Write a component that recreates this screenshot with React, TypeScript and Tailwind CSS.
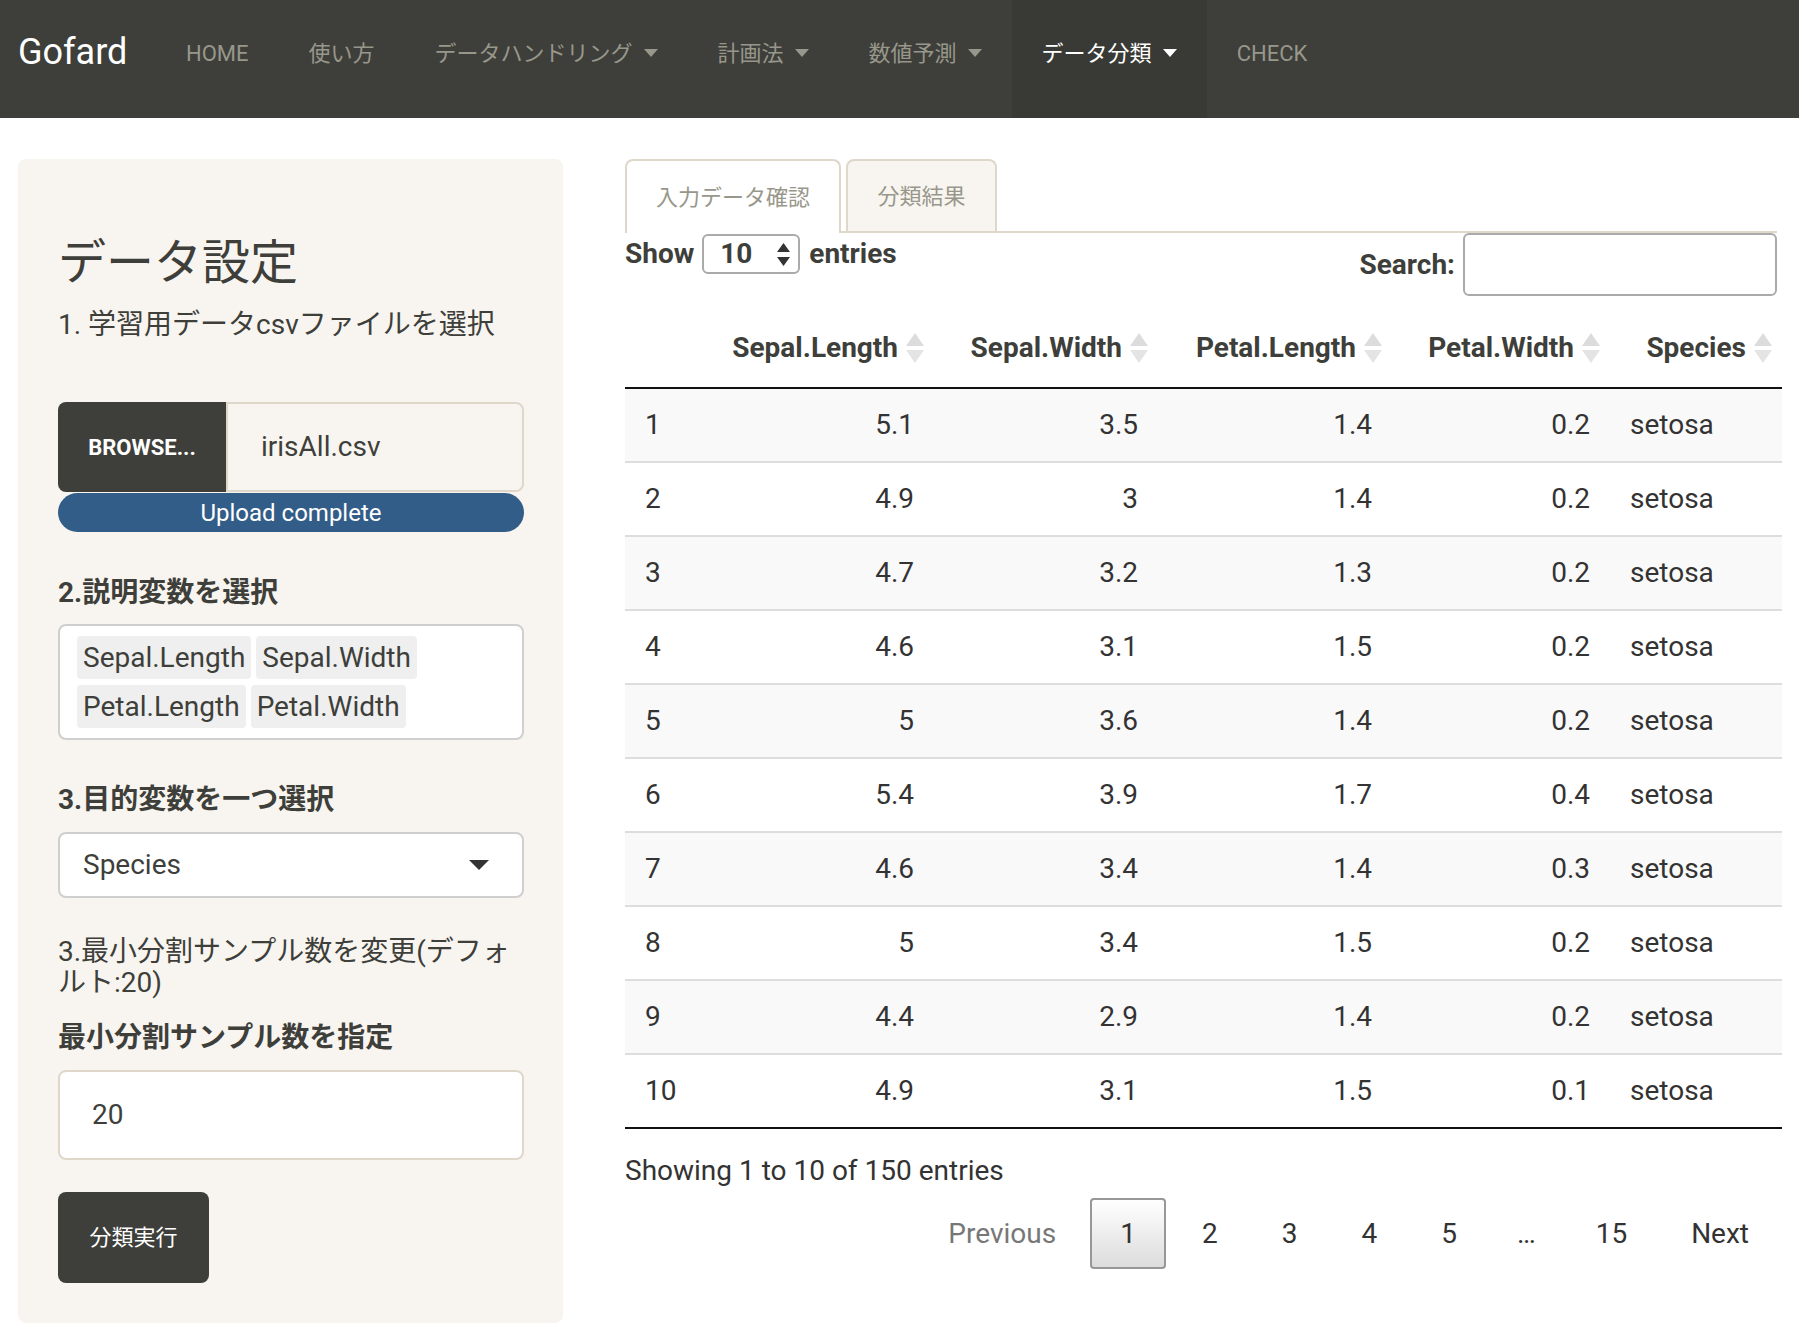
import React from 'react';

const navItems = [
  { label: 'HOME', caret: false, active: false },
  { label: '使い方', caret: false, active: false },
  { label: 'データハンドリング', caret: true, active: false },
  { label: '計画法', caret: true, active: false },
  { label: '数値予測', caret: true, active: false },
  { label: 'データ分類', caret: true, active: true },
  { label: 'CHECK', caret: false, active: false },
];

const columns = ['', 'Sepal.Length', 'Sepal.Width', 'Petal.Length', 'Petal.Width', 'Species'];

const rows = [
  ['1', '5.1', '3.5', '1.4', '0.2'],
  ['2', '4.9', '3', '1.4', '0.2'],
  ['3', '4.7', '3.2', '1.3', '0.2'],
  ['4', '4.6', '3.1', '1.5', '0.2'],
  ['5', '5', '3.6', '1.4', '0.2'],
  ['6', '5.4', '3.9', '1.7', '0.4'],
  ['7', '4.6', '3.4', '1.4', '0.3'],
  ['8', '5', '3.4', '1.5', '0.2'],
  ['9', '4.4', '2.9', '1.4', '0.2'],
  ['10', '4.9', '3.1', '1.5', '0.1'],
];

const grid = 'grid grid-cols-[75px_234px_224px_234px_218px_172px]';

function Caret() {
  return (
    <svg width="14" height="8" viewBox="0 0 14 8" className="ml-[11px]">
      <polygon points="0,0 14,0 7,8" fill="currentColor" />
    </svg>
  );
}

function SortIcon() {
  return (
    <svg width="18" height="30" viewBox="0 0 18 30" className="absolute right-[10px] top-1/2 -translate-y-1/2">
      <polygon points="9,0 18,13 0,13" fill="#dcdcdc" />
      <polygon points="0,17 18,17 9,30" fill="#e4e4e4" />
    </svg>
  );
}

function Navbar() {
  return (
    <div className="flex h-[118px] items-stretch bg-[#3e3f3a]">
      <div className="flex w-[156px] items-center pb-[14px] pl-[18px] text-[36px] text-white">Gofard</div>
      {navItems.map((item) => (
        <div
          key={item.label}
          className={
            item.active
              ? 'flex items-center bg-[#393a35] px-[30px] pb-[12px] text-[22px] text-white'
              : 'flex items-center px-[30px] pb-[12px] text-[22px] text-[#98978b]'
          }
        >
          <span>{item.label}</span>
          {item.caret && <Caret />}
        </div>
      ))}
    </div>
  );
}

function Sidebar() {
  return (
    <div className="ml-[18px] mt-[41px] flex w-[545px] flex-col rounded-[8px] bg-[#f8f5f0] pb-[40px] pl-[40px] pr-[39px] pt-[77px] text-[#3e3f3a]">
      <h3 className="text-[48px] leading-[53px]">データ設定</h3>
      <p className="mt-[16px] text-[28px] leading-[40px]">1. 学習用データcsvファイルを選択</p>

      <div className="mt-[57px] flex h-[90px]">
        <div className="flex w-[168px] items-center justify-center rounded-l-[8px] bg-[#3e3f3a] text-[22px] font-bold text-white">
          BROWSE...
        </div>
        <div className="flex flex-1 items-center rounded-r-[8px] border-2 border-[#dfd7ca] bg-[#f8f5f0] pl-[33px] text-[28px]">
          irisAll.csv
        </div>
      </div>
      <div className="mt-[1px] flex h-[39px] items-center justify-center rounded-full bg-[#325d88] text-[24px] text-white">
        Upload complete
      </div>

      <label className="mt-[41px] text-[28px] font-bold leading-[40px]">2.説明変数を選択</label>
      <div className="mt-[11px] flex h-[116px] flex-col gap-[6px] rounded-[8px] border-2 border-[#cfcfcf] bg-white pl-[17px] pt-[10px]">
        <div className="flex gap-[5px]">
          <span className="flex h-[43px] items-center rounded-[4px] bg-[#efefef] px-[6px] text-[28px]">Sepal.Length</span>
          <span className="flex h-[43px] items-center rounded-[4px] bg-[#efefef] px-[6px] text-[28px]">Sepal.Width</span>
        </div>
        <div className="flex gap-[5px]">
          <span className="flex h-[43px] items-center rounded-[4px] bg-[#efefef] px-[6px] text-[28px]">Petal.Length</span>
          <span className="flex h-[43px] items-center rounded-[4px] bg-[#efefef] px-[6px] text-[28px]">Petal.Width</span>
        </div>
      </div>

      <label className="mt-[40px] text-[28px] font-bold leading-[40px]">3.目的変数を一つ選択</label>
      <div className="mt-[12px] flex h-[66px] items-center justify-between rounded-[8px] border-2 border-[#cfcfcf] bg-white pl-[23px] pr-[33px] text-[28px]">
        <span>Species</span>
        <svg width="20" height="10" viewBox="0 0 20 10">
          <polygon points="0,0 20,0 10,10" fill="#333" />
        </svg>
      </div>

      <p className="mt-[38px] text-[28px] leading-[31px]">3.最小分割サンプル数を変更(デフォルト:20)</p>
      <label className="mt-[20px] text-[28px] font-bold leading-[40px]">最小分割サンプル数を指定</label>
      <div className="mt-[12px] flex h-[90px] items-center rounded-[8px] border-2 border-[#dfd7ca] bg-white pl-[32px] text-[28px]">
        20
      </div>

      <button className="mt-[32px] h-[91px] w-[151px] rounded-[8px] bg-[#3e3f3a] text-[22px] text-white">分類実行</button>
    </div>
  );
}

function PageButton({ label, current }: { label: string; current?: boolean }) {
  return (
    <span
      className={
        current
          ? 'flex h-[71px] items-center rounded-[4px] border-2 border-[#979797] bg-gradient-to-b from-white to-[#dcdcdc] px-[28px] text-[#333]'
          : 'flex h-[71px] items-center border-2 border-transparent px-[26px] text-[#333]'
      }
    >
      {label}
    </span>
  );
}

function MainPanel() {
  return (
    <div className="ml-[62px] mt-[41px] flex w-[1157px] flex-col text-[#333]">
      <div className="mr-[5px] flex h-[74px] items-end gap-[5px] border-b-2 border-[#dfd7ca]">
        <div className="relative z-10 -mb-[2px] flex h-[74px] w-[216px] items-center justify-center rounded-t-[8px] border-2 border-b-0 border-[#dfd7ca] bg-white text-[22px] text-[#98978b]">
          入力データ確認
        </div>
        <div className="flex h-[72px] w-[151px] items-center justify-center rounded-t-[8px] border-2 border-b-0 border-[#dfd7ca] bg-[#f8f5f0] text-[22px] text-[#98978b]">
          分類結果
        </div>
      </div>

      <div className="mr-[5px] flex h-[75px] items-start justify-between text-[28px] font-bold text-[#3e3f3a]">
        <div className="mt-[1px] flex h-[40px] items-center">
          <span>Show</span>
          <div className="ml-[8px] flex h-[40px] w-[98px] items-center justify-between rounded-[6px] border-2 border-[#aaa] pl-[16px] pr-[8px]">
            <span>10</span>
            <svg width="13" height="23" viewBox="0 0 13 23">
              <polygon points="6.5,0 13,9 0,9" fill="#333" />
              <polygon points="0,14 13,14 6.5,23" fill="#333" />
            </svg>
          </div>
          <span className="ml-[9px]">entries</span>
        </div>
        <div className="flex h-[63px] items-center gap-[8px]">
          <span>Search:</span>
          <div className="h-[63px] w-[314px] rounded-[6px] border-2 border-[#aaa] bg-white" />
        </div>
      </div>

      <div className={`${grid} h-[81px] border-b-2 border-[#111] text-[28px] font-bold text-[#3e3f3a]`}>
        {columns.map((c, i) => (
          <div key={i} className="relative flex items-center justify-end pr-[36px]">
            {c}
            {i > 0 && <SortIcon />}
          </div>
        ))}
      </div>

      {rows.map((r, idx) => (
        <div
          key={r[0]}
          className={`${grid} text-[28px] ${idx === 0 ? 'h-[72px]' : 'h-[74px] border-t-2 border-[#dddddd]'} ${
            idx % 2 === 0 ? 'bg-[#f9f9f9]' : 'bg-white'
          }`}
        >
          <div className="flex items-center pl-[20px]">{r[0]}</div>
          {r.slice(1).map((v, j) => (
            <div key={j} className="flex items-center justify-end pr-[20px]">
              {v}
            </div>
          ))}
          <div className="flex items-center pl-[20px]">setosa</div>
        </div>
      ))}
      <div className="h-[2px] bg-[#111]" />

      <div className="mt-[22px] text-[28px] leading-[40px]">Showing 1 to 10 of 150 entries</div>
      <div className="mr-[5px] mt-[7px] flex items-center justify-end gap-[8px] text-[28px]">
        <span className="flex h-[71px] items-center px-[26px] text-[#777]">Previous</span>
        <PageButton label="1" current />
        <PageButton label="2" />
        <PageButton label="3" />
        <PageButton label="4" />
        <PageButton label="5" />
        <span className="flex h-[71px] items-center px-[24px]">…</span>
        <PageButton label="15" />
        <PageButton label="Next" />
      </div>
    </div>
  );
}

export default function App() {
  return (
    <div className="min-h-[1342px] w-[1799px] bg-white font-['Roboto','Noto_Sans_CJK_JP',sans-serif] text-[#3e3f3a]">
      <Navbar />
      <div className="flex items-start">
        <Sidebar />
        <MainPanel />
      </div>
    </div>
  );
}
